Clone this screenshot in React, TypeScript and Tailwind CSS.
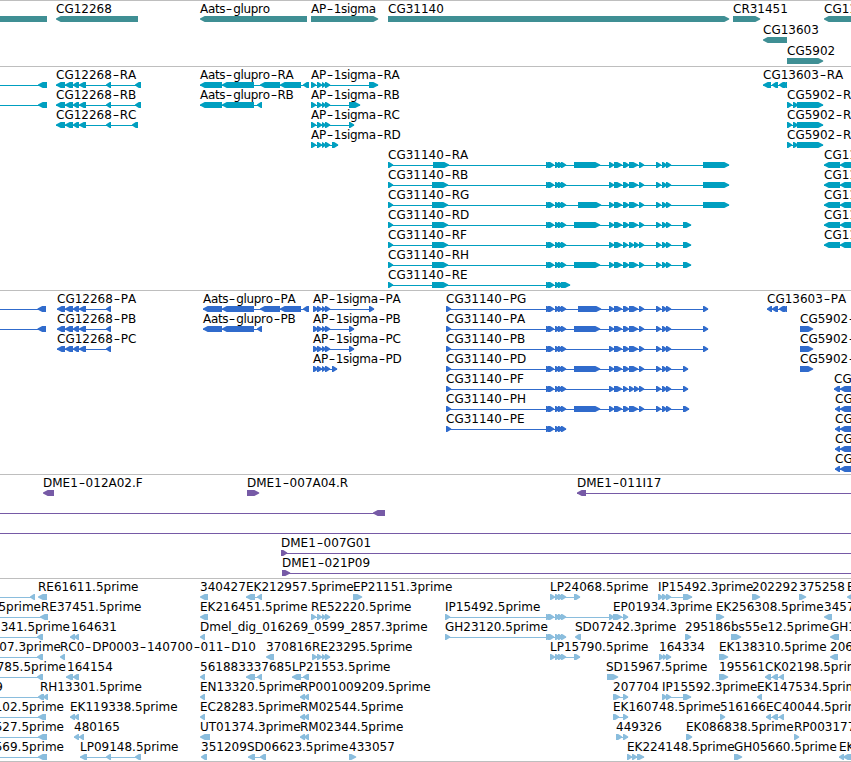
import React from "react";

type Dir = "L" | "R";
type Span = [number, number];

interface Feature {
  name?: string;
  /** label start; defaults to the first block */
  at?: number;
  /** label end, for labels that begin beyond the left edge */
  end?: number;
  dir: Dir;
  line?: Span;
  blocks: Span[];
}

interface Track {
  id: string;
  color: string;
  pitch: string;
  rows: Feature[][];
}

const WIDTH = 851;

const f = (name: string, dir: Dir, blocks: Span[], extra: Partial<Feature> = {}): Feature => ({
  name,
  dir,
  blocks,
  line: blocks.length > 1 ? [blocks[0][0], blocks[blocks.length - 1][1]] : undefined,
  ...extra,
});

/** feature that runs off the left edge */
const off = (block: Span | Span[], name?: string, end?: number): Feature => {
  const blocks = (Array.isArray(block[0]) ? block : [block]) as Span[];
  return { name, end, dir: "L", blocks, line: [0, blocks[blocks.length - 1][1]] };
};

const cg12268: Span[] = [[65, 73], [73, 79], [79, 86], [106, 111]];
const ap: Span[] = [[317, 322], [322, 326], [325, 330]];
const trio: Span[] = [[546, 551], [548, 554], [555, 560], [558, 563], [561, 566]];
const mid: Span[] = [[609, 614], [614, 622], [623, 629], [629, 638], [639, 644], [656, 661], [662, 667], [666, 671]];
const midF: Span[] = [[609, 614], [614, 622], [623, 628], [629, 634], [634, 639], [639, 644], [656, 661], [662, 667], [666, 671]];

const genes: Track = {
  id: "genes",
  color: "#3f8f94",
  pitch: "h-[21px]",
  rows: [
    [
      off([-20, 47]),
      f("CG12268", "L", [[56, 138]]),
      f("Aats-glupro", "L", [[200, 307]]),
      f("AP-1sigma", "R", [[311, 378]]),
      f("CG31140", "R", [[388, 729]]),
      f("CR31451", "R", [[733, 760]]),
      f("CG11", "L", [[824, 870]]),
    ],
    [f("CG13603", "L", [[763, 787]])],
    [f("CG5902", "R", [[787, 823]])],
  ],
};

const rna = (suffix: string, blocks: Span[]): Feature => f("CG31140-" + suffix, "R", blocks);
const cg1 = f("CG11", "L", [[824, 840], [840, 870]]);
const cg5902r = (s: string) => f("CG5902-" + s, "R", [[787, 792], [793, 798], [797, 823]]);

const transcripts: Track = {
  id: "transcripts",
  color: "#009fc0",
  pitch: "h-5",
  rows: [
    [
      off([38, 47]),
      f("CG12268-RA", "L", [[56, 65], ...cg12268, [135, 141]]),
      f("Aats-glupro-RA", "L", [[200, 222], [222, 254], [260, 280], [280, 301], [303, 309]]),
      f("AP-1sigma-RA", "R", [[311, 316], ...ap, [369, 378]]),
      f("CG13603-RA", "L", [[763, 771], [772, 778], [779, 785], [782, 787]]),
    ],
    [
      off([38, 47]),
      f("CG12268-RB", "L", [[56, 65], ...cg12268, [135, 141]]),
      f("Aats-glupro-RB", "L", [[200, 222], [222, 254], [257, 262]]),
      f("AP-1sigma-RB", "R", [[311, 316], ...ap, [349, 360]]),
      cg5902r("RA"),
    ],
    [
      f("CG12268-RC", "L", [[56, 65], ...cg12268, [132, 138]]),
      f("AP-1sigma-RC", "R", [[311, 316], ...ap, [349, 354]]),
      cg5902r("RB"),
    ],
    [f("AP-1sigma-RD", "R", [[311, 316], ...ap, [332, 338]]), cg5902r("RC")],
    [rna("RA", [[388, 393], [433, 449], ...trio, [574, 600], ...mid, [703, 729]]), cg1],
    [rna("RB", [[388, 393], [432, 448], ...trio, ...mid, [703, 729]]), cg1],
    [rna("RG", [[388, 393], [432, 448], ...trio, [578, 601], ...mid, [703, 729]]), cg1],
    [rna("RD", [[388, 393], [432, 448], ...trio, [574, 600], ...mid, [683, 691]]), cg1],
    [rna("RF", [[388, 393], [432, 448], ...trio, ...midF, [683, 691]]), cg1],
    [rna("RH", [[388, 393], [432, 448], ...trio, [574, 600], ...mid, [683, 691]])],
    [rna("RE", [[388, 393], [432, 448], [546, 551], [548, 554], [555, 560], [558, 563], [561, 570]])],
  ],
};

const cds = (suffix: string, blocks: Span[]): Feature => f("CG31140-" + suffix, "R", [[446, 451], ...trio, ...blocks]);
const cg5902p = (s: string) => f("CG5902-" + s, "R", [[800, 813]]);
const cgp = (x: number) => f("CG11", "L", [[x, 840], [840, 870]]);

const proteins: Track = {
  id: "proteins",
  color: "#306bcc",
  pitch: "h-5",
  rows: [
    [
      off([37.5, 46]),
      f("CG12268-PA", "L", [[57, 65], ...cg12268]),
      f("Aats-glupro-PA", "L", [[203, 222], [222, 254], [260, 280], [280, 301], [303, 309]]),
      f("AP-1sigma-PA", "R", [[313, 318], ...ap, [369, 374]]),
      cds("PG", [[578, 601], ...mid, [703, 708]]),
      f("CG13603-PA", "L", [[767, 772], [772, 778], [779, 785], [782, 787]]),
    ],
    [
      off([37.5, 46]),
      f("CG12268-PB", "L", [[57, 65], ...cg12268]),
      f("Aats-glupro-PB", "L", [[203, 222], [222, 254], [257, 262]]),
      f("AP-1sigma-PB", "R", [[313, 318], ...ap, [349, 354]]),
      cds("PA", [[574, 600], ...mid, [703, 708]]),
      cg5902p("PA"),
    ],
    [
      f("CG12268-PC", "L", [[57, 65], ...cg12268]),
      f("AP-1sigma-PC", "R", [[313, 318], ...ap, [349, 354]]),
      cds("PB", [...mid, [703, 708]]),
      cg5902p("PB"),
    ],
    [
      f("AP-1sigma-PD", "R", [[313, 318], ...ap, [332, 337]]),
      cds("PD", [[574, 600], ...mid, [683, 688]]),
      cg5902p("PC"),
    ],
    [cds("PF", [...midF, [683, 688]]), cgp(834)],
    [cds("PH", [[574, 600], ...mid, [683, 689]]), cgp(835)],
    [cds("PE", []), cgp(835)],
    [cgp(835)],
    [cgp(835)],
  ],
};

const clones: Track = {
  id: "clones",
  color: "#765aa6",
  pitch: "h-5",
  rows: [
    [
      f("DME1-012A02.F", "L", [[43, 54]]),
      f("DME1-007A04.R", "R", [[247, 259]]),
      f("DME1-011I17", "L", [[577, 586]], { line: [577, WIDTH] }),
    ],
    [off([373, 385])],
    [{ dir: "R", blocks: [], line: [0, WIDTH] }],
    [f("DME1-007G01", "R", [[281, 287]], { line: [281, WIDTH] })],
    [f("DME1-021P09", "R", [[282, 287], [283, 290]], { line: [282, WIDTH] })],
  ],
};

const lp: Span[] = [[550, 555], [555, 560], [558, 563], [561, 566], [574, 580]];

const ests: Track = {
  id: "ests",
  color: "#8abddd",
  pitch: "h-5",
  rows: [
    [
      off([30, 35]),
      f("RE61611.5prime", "L", [[38, 47]]),
      f("340427", "L", [[200, 208]]),
      f("EK212957.5prime", "L", [[246, 255], [257, 262]]),
      f("EP21151.3prime", "R", [[353, 362]]),
      f("LP24068.5prime", "R", lp),
      f("IP15492.3prime", "R", [[658, 663], [662, 667], [666, 671], [683, 692]]),
      f("202292", "R", [[752, 760]]),
      f("375258", "R", [[799, 806]]),
      f("EK", "L", [[847, 858]]),
    ],
    [
      off([[40, 48]], "5prime", 41),
      f("RE37451.5prime", "L", [], { at: 41 }),
      f("EK216451.5prime", "L", [[200, 208]]),
      f("RE52220.5prime", "R", [[311, 316], ...ap]),
      f("IP15492.5prime", "R", [[445, 450], ...trio, [609, 614]]),
      f("EP01934.3prime", "R", [[613, 622], [623, 628]]),
      f("EK256308.5prime", "R", [[716, 724]]),
      f("345724", "L", [[824, 832]]),
    ],
    [
      off([37, 43], "341.5prime", 70),
      f("164631", "L", [[70, 75], [74, 79]], { at: 71 }),
      f("Dmel_dig_016269_0599_2857.3prime", "L", [[200, 205]]),
      f("GH23120.5prime", "R", [[445, 450], ...trio]),
      f("SD07242.3prime", "L", [[575, 581]]),
      f("295186", "R", [[685, 691]]),
      f("bs55e12.5prime", "R", [[731, 741]]),
      f("GH12", "L", [[830, 839]]),
    ],
    [
      off([37, 43], "07.3prime", 61),
      f("RC0-DP0003-140700-011-D10", "L", [[60, 65]]),
      f("370816", "L", [[266, 274]]),
      f("RE23295.5prime", "R", [[312, 317], ...ap]),
      f("LP15790.5prime", "R", lp),
      f("164334", "R", [[659, 664], [663, 667], [666, 671]]),
      f("EK138310.5prime", "R", [[719, 728]]),
      f("206", "L", [[830, 838]]),
    ],
    [
      off([37, 43], "785.5prime", 66),
      f("164154", "L", [[66, 73], [73, 79]], { at: 67 }),
      f("561883", "L", [[200, 205]]),
      f("337685", "L", [[246, 255], [257, 262]]),
      f("LP21553.5prime", "L", [[292, 301], [303, 309]]),
      f("SD15967.5prime", "R", [[607, 618]], { at: 606 }),
      f("195561", "R", [[719, 728]]),
      f("CK02198.5prime", "L", [[765, 771], [772, 778], [779, 784]]),
    ],
    [
      off([[38, 44], [43, 48]], "9", 3),
      f("RH13301.5prime", "L", [], { at: 40 }),
      f("EN13320.5prime", "L", [[200, 205]]),
      f("RP001009209.5prime", "L", [[300, 305], [304, 309]]),
      f("207704", "R", [[613, 620], [623, 628]]),
      f("IP15592.3prime", "R", [[662, 667], [666, 671], [683, 691]]),
      f("EK147534.5prime", "L", [[757, 762]]),
    ],
    [
      off([38, 46], "102.5prime", 64),
      f("EK119338.5prime", "L", [[70, 75], [74, 79]]),
      f("EC28283.5prime", "L", [[200, 205]]),
      f("RM02544.5prime", "L", [[300, 305], [304, 309]]),
      f("EK160748.5prime", "R", [[613, 619], [623, 628]]),
      f("516166", "R", [[720, 725]]),
      f("EC40044.5prime", "L", [[766, 771], [772, 778], [779, 784]]),
    ],
    [
      off([38, 47], "527.5prime", 64),
      f("480165", "L", [[74, 79], [79, 84]]),
      f("UT01374.3prime", "L", [[200, 210]]),
      f("RM02344.5prime", "L", [[300, 305], [304, 309]]),
      f("449326", "R", [[616, 622], [623, 628]]),
      f("EK086838.5prime", "R", [[686, 692]]),
      f("RP003177", "R", [[794, 799]]),
    ],
    [
      off([38, 47], "569.5prime", 64),
      f("LP09148.5prime", "L", [[80, 87], [106, 111], [135, 141]]),
      f("351209", "L", [[201, 207]]),
      f("SD06623.5prime", "L", [[248, 255], [260, 266]], { at: 247 }),
      f("433057", "R", [[349, 356]]),
      f("EK224148.5prime", "R", [[627, 632], [632, 637], [637, 644]]),
      f("GH05660.5prime", "R", [[734, 742]]),
      f("EK", "L", [[839, 844], [843, 851]]),
    ],
  ],
};

/** block with a full-height body and a tapered head */
function arrow([a, b]: Span, dir: Dir) {
  const head = b - a > 6 ? 4.7 : 3.8;
  return dir === "R"
    ? `M${a} 0H${b - head}L${b + 0.2} 2.4V3.6L${b - head} 6H${a}Z`
    : `M${b} 0H${a + head}L${a} 2.4V3.6L${a + head} 6H${b}Z`;
}

function Label({ feature }: { feature: Feature }) {
  const { name, at, end, blocks } = feature;
  if (!name) return null;
  const wordy = name.startsWith("AP-") || name.startsWith("Aats");
  const style = end !== undefined ? { right: WIDTH - end } : { left: at ?? blocks[0][0] };
  const parts = name.split("-");
  return (
    <span
      className={`absolute top-0 whitespace-nowrap ${wordy ? "tracking-[-0.3px]" : "tracking-normal"}`}
      style={style}
    >
      {parts.map((part, i) => (
        <React.Fragment key={i}>
          {i > 0 && <span className="inline-block w-[7.8px] scale-x-150 text-center">-</span>}
          {part}
        </React.Fragment>
      ))}
    </span>
  );
}

function Row({ features, color, pitch }: { features: Feature[]; color: string; pitch: string }) {
  return (
    <div className={`relative w-full ${pitch}`}>
      <div className="h-[14px] leading-[14px]">
        {features.map((x, i) => (
          <Label key={i} feature={x} />
        ))}
      </div>
      <svg className="block" width={WIDTH} height={6} viewBox={`0 0 ${WIDTH} 6`} fill={color}>
        {features.map((x, i) => (
          <g key={i}>
            {x.line && <rect x={x.line[0]} y={3} width={x.line[1] - x.line[0]} height={1} />}
            {x.blocks.map((b, j) => (
              <path key={j} d={arrow(b, x.dir)} />
            ))}
          </g>
        ))}
      </svg>
    </div>
  );
}

const tracks: Track[] = [genes, transcripts, proteins, clones, ests];
const padding = ["pb-px", "pb-0.5", "pb-0.5", "pb-0.5", "pb-px"];

export default function App() {
  return (
    <main className="flex h-[762px] w-[851px] flex-col overflow-hidden border-b border-[#bebebe] bg-white font-['DejaVu_Sans','Liberation_Sans',sans-serif] text-[12px] text-black [font-kerning:none]">
      {tracks.map((track, i) => (
        <section key={track.id} className={`overflow-hidden border-t border-[#bebebe] pt-px ${padding[i]}`}>
          {track.rows.map((row, j) => (
            <Row key={j} features={row} color={track.color} pitch={track.pitch} />
          ))}
        </section>
      ))}
    </main>
  );
}
